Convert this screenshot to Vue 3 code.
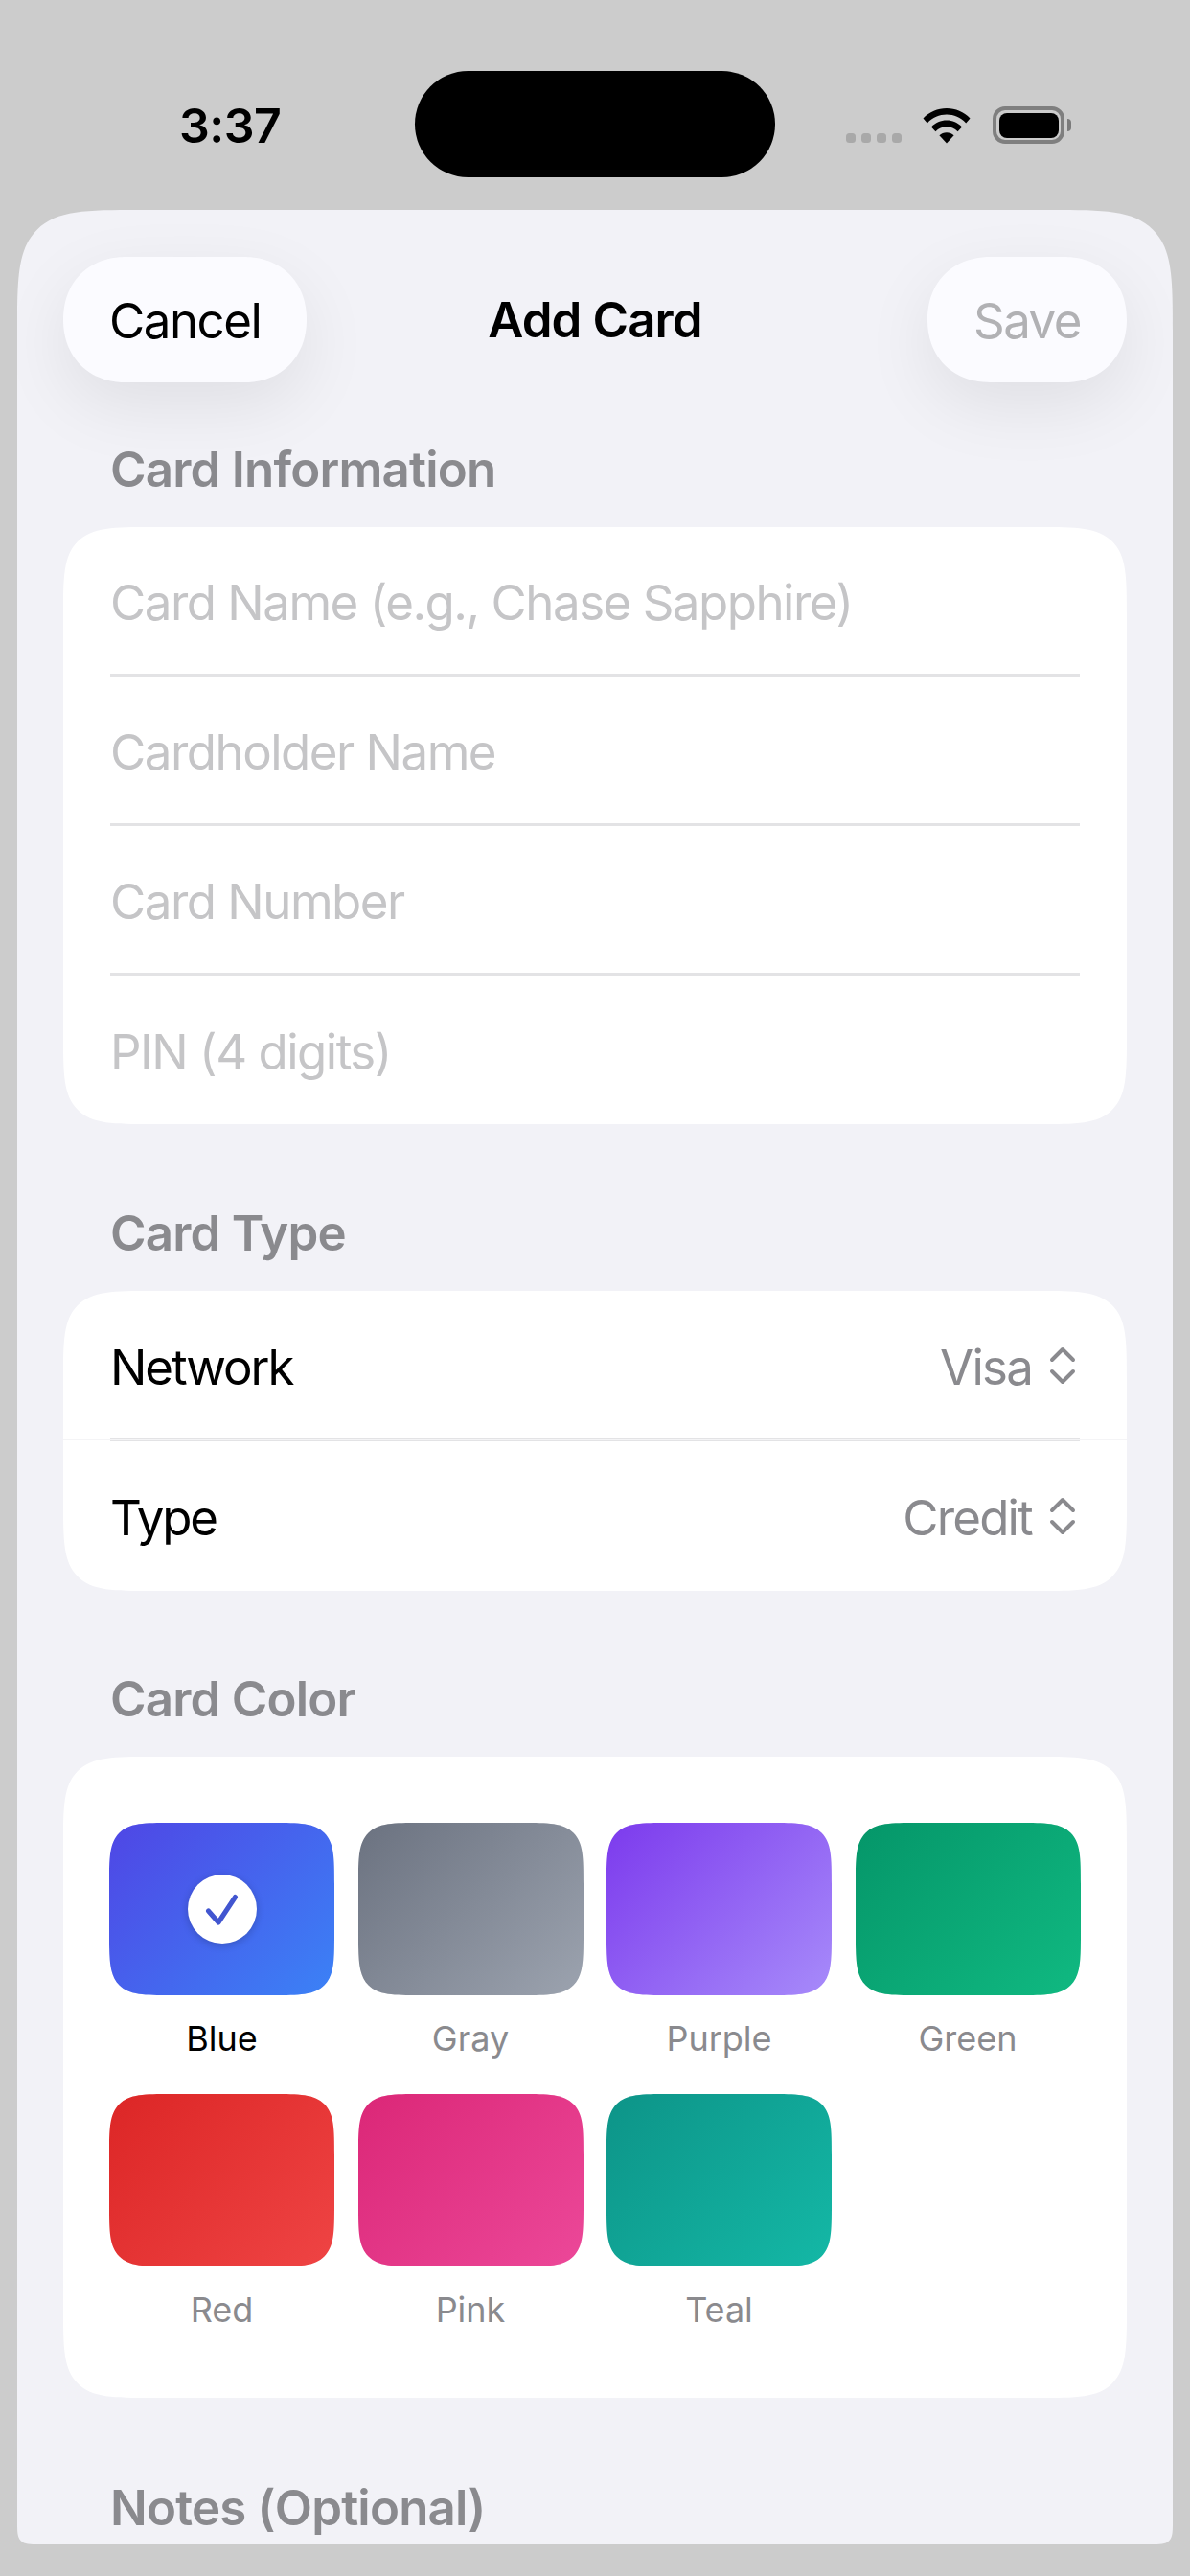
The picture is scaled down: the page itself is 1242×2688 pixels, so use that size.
<script setup>
const infoFields = ['Card Name (e.g., Chase Sapphire)', 'Cardholder Name', 'Card Number', 'PIN (4 digits)']
const pickers = [
  { label: 'Network', value: 'Visa' },
  { label: 'Type', value: 'Credit' }
]
const colors = [
  { name: 'Blue', from: '#4f46e5', to: '#3b82f6', selected: true },
  { name: 'Gray', from: '#6b7280', to: '#9ca3af' },
  { name: 'Purple', from: '#7c3aed', to: '#a78bfa' },
  { name: 'Green', from: '#059669', to: '#10b981' },
  { name: 'Red', from: '#dc2626', to: '#ef4444' },
  { name: 'Pink', from: '#db2777', to: '#ec4899' },
  { name: 'Teal', from: '#0d9488', to: '#14b8a6' }
]
</script>

<template>
  <div class="screen">
    <div class="status">
      <span class="time">3:37</span>
      <div class="island"></div>
      <div class="status-icons">
        <div class="dots"><i></i><i></i><i></i><i></i></div>
        <svg class="wifi" width="52" height="38" viewBox="0 0 52 38">
          <path d="M1.5 11.5 C8 4.6 16.6 1 26 1 C35.4 1 44 4.6 50.5 11.5 L46.2 16.4 C40.6 10.7 33.6 7.6 26 7.6 C18.4 7.6 11.4 10.7 5.8 16.4 Z" fill="#000"/>
          <path d="M10 20.4 C14.3 16 19.9 13.6 26 13.6 C32.1 13.6 37.7 16 42 20.4 L37.6 25.2 C34.4 22 30.4 20.2 26 20.2 C21.6 20.2 17.6 22 14.4 25.2 Z" fill="#000"/>
          <path d="M18.4 29.3 C20.5 27.4 23.1 26.3 26 26.3 C28.9 26.3 31.5 27.4 33.6 29.3 L26 37.6 Z" fill="#000"/>
        </svg>
        <div class="battery"><div class="battery-fill"></div></div>
        <div class="battery-cap"></div>
      </div>
    </div>

    <div class="sheet">
      <header class="nav">
        <button class="pill">Cancel</button>
        <span class="nav-title">Add Card</span>
        <button class="pill pill-disabled">Save</button>
      </header>

      <section class="section first">
        <h2 class="section-title">Card Information</h2>
        <div class="card">
          <div v-for="f in infoFields" :key="f" class="row">
            <span class="placeholder">{{ f }}</span>
          </div>
        </div>
      </section>

      <section class="section second">
        <h2 class="section-title">Card Type</h2>
        <div class="card">
          <div v-for="p in pickers" :key="p.label" class="row picker">
            <span class="row-label">{{ p.label }}</span>
            <span class="row-value">{{ p.value }}</span>
            <svg class="updown" width="30" height="42" viewBox="0 0 30 42">
              <path d="M4 15 L15 4 L26 15 M4 27 L15 38 L26 27" fill="none" stroke="#8a8a8e" stroke-width="4" stroke-linecap="round" stroke-linejoin="round"/>
            </svg>
          </div>
        </div>
      </section>

      <section class="section third">
        <h2 class="section-title">Card Color</h2>
        <div class="card color-card">
          <div v-for="c in colors" :key="c.name" class="color">
            <div class="swatch" :style="{ background: `linear-gradient(135deg, ${c.from}, ${c.to})` }">
              <div v-if="c.selected" class="check">
                <svg width="36" height="36" viewBox="0 0 36 36">
                  <path d="M3.5 20 L14 32 L31.5 5.5" fill="none" stroke="#4256d0" stroke-width="5" stroke-linecap="round" stroke-linejoin="round"/>
                </svg>
              </div>
            </div>
            <span class="color-name" :class="{ active: c.selected }">{{ c.name }}</span>
          </div>
        </div>
      </section>

      <section class="section fourth">
        <h2 class="section-title">Notes (Optional)</h2>
      </section>
    </div>
  </div>
</template>

<style scoped>
.screen {
  width: 1242px;
  height: 2688px;
  background: #cccccc;
  overflow: hidden;
  font-family: Inter, "Noto Sans", sans-serif;
  color: #000;
}
.status {
  position: relative;
  height: 219px;
}
.time {
  position: absolute;
  left: 187px;
  top: 101px;
  font-size: 50px;
  line-height: 60px;
  font-weight: 600;
  letter-spacing: -0.5px;
}
.island {
  position: absolute;
  left: 433px;
  top: 74px;
  width: 376px;
  height: 111px;
  background: #000;
  border-radius: 56px;
}
.status-icons {
  position: absolute;
  left: 883px;
  top: 111px;
  width: 240px;
  height: 40px;
}
.dots {
  position: absolute;
  left: 0;
  top: 28px;
  display: flex;
  gap: 6px;
}
.dots i {
  width: 10px;
  height: 10px;
  border-radius: 3.5px;
  background: #a9a9a9;
}
.wifi {
  position: absolute;
  left: 79px;
  top: 0.5px;
}
.battery {
  position: absolute;
  left: 153px;
  top: 0;
  width: 75px;
  height: 39px;
  box-sizing: border-box;
  border: 4px solid #7f7f7f;
  border-radius: 13px;
  padding: 2.5px;
}
.battery-fill {
  height: 100%;
  background: #000;
  border-radius: 8px;
}
.battery-cap {
  position: absolute;
  left: 231px;
  top: 13px;
  width: 4px;
  height: 13px;
  background: #7a7a7a;
  border-radius: 0 4px 4px 0;
}
.sheet {
  margin: 0 18px;
  height: 2436px;
  box-sizing: border-box;
  padding: 49px 48px 0;
  background: #f2f2f7;
  border-radius: 130px 130px 24px 24px;
  corner-shape: squircle;
  overflow: hidden;
}
.nav {
  display: grid;
  grid-template-columns: 1fr auto 1fr;
  align-items: center;
  height: 131px;
}
.nav .pill:last-child {
  justify-self: end;
}
.nav .pill:first-child {
  justify-self: start;
}
.pill {
  height: 131px;
  padding: 3px 48px 0;
  border: 0;
  border-radius: 66px;
  corner-shape: superellipse(1.1);
  background: #fbfbff;
  box-shadow: 0 24px 72px rgba(0, 0, 0, 0.08);
  font: 400 51px/60px Inter, sans-serif;
  letter-spacing: -1.5px;
  color: #000;
}
.pill-disabled {
  color: #b1b1b4;
}
.nav-title {
  font-size: 51px;
  font-weight: 600;
  letter-spacing: -0.9px;
}
.section-title {
  margin: 0 0 30px 49px;
  font-size: 51px;
  line-height: 60px;
  font-weight: 600;
  letter-spacing: -0.8px;
  color: #8a8a8e;
}
.section.first { margin-top: 61px; }
.section.second { margin-top: 84px; }
.section.third { margin-top: 83px; }
.section.fourth { margin-top: 85px; }
.card {
  background: #fff;
  border-radius: 95px;
  corner-shape: squircle;
  overflow: hidden;
}
.row {
  position: relative;
  height: 156px;
  margin: 0 49px;
  padding-top: 4px;
  display: flex;
  align-items: center;
  border-bottom: 3px solid #e3e3e5;
  box-sizing: border-box;
}
.row:last-child {
  height: 155px;
  padding-top: 3px;
  border-bottom: 0;
}
.placeholder {
  font-size: 51px;
  letter-spacing: -1.5px;
  color: #c5c5c7;
}
.picker {
  height: 156.5px;
  padding-top: 5px;
}
.picker:last-child {
  height: 156.5px;
  padding-top: 3px;
}
.picker:first-child::after {
  content: "";
  position: absolute;
  left: -49px;
  right: -49px;
  bottom: -2px;
  height: 1px;
  background: #f4f4f6;
}
.row-label {
  font-size: 51px;
  letter-spacing: -2.1px;
  flex: 1;
}
.row-value {
  font-size: 51px;
  letter-spacing: -1.8px;
  color: #8a8a8e;
}
.updown {
  margin: 0 3px 2px 17px;
}
.color-card {
  display: grid;
  grid-template-columns: repeat(4, 235px);
  column-gap: 24.5px;
  row-gap: 36px;
  padding: 69px 48px 70px;
}
.color {
  display: flex;
  flex-direction: column;
  align-items: center;
}
.swatch {
  width: 100%;
  height: 180px;
  border-radius: 66px;
  corner-shape: squircle;
  display: flex;
  align-items: center;
  justify-content: center;
}
.check {
  width: 72px;
  height: 72px;
  border-radius: 50%;
  background: #fff;
  box-shadow: 0 2px 8px rgba(0, 0, 0, 0.2);
  display: flex;
  align-items: center;
  justify-content: center;
}
.color-name {
  margin-top: 23px;
  font-size: 36px;
  line-height: 44px;
  color: #8a8a8e;
}
.color-name.active {
  color: #000;
}
</style>

<style>
body { margin: 0; }
</style>
